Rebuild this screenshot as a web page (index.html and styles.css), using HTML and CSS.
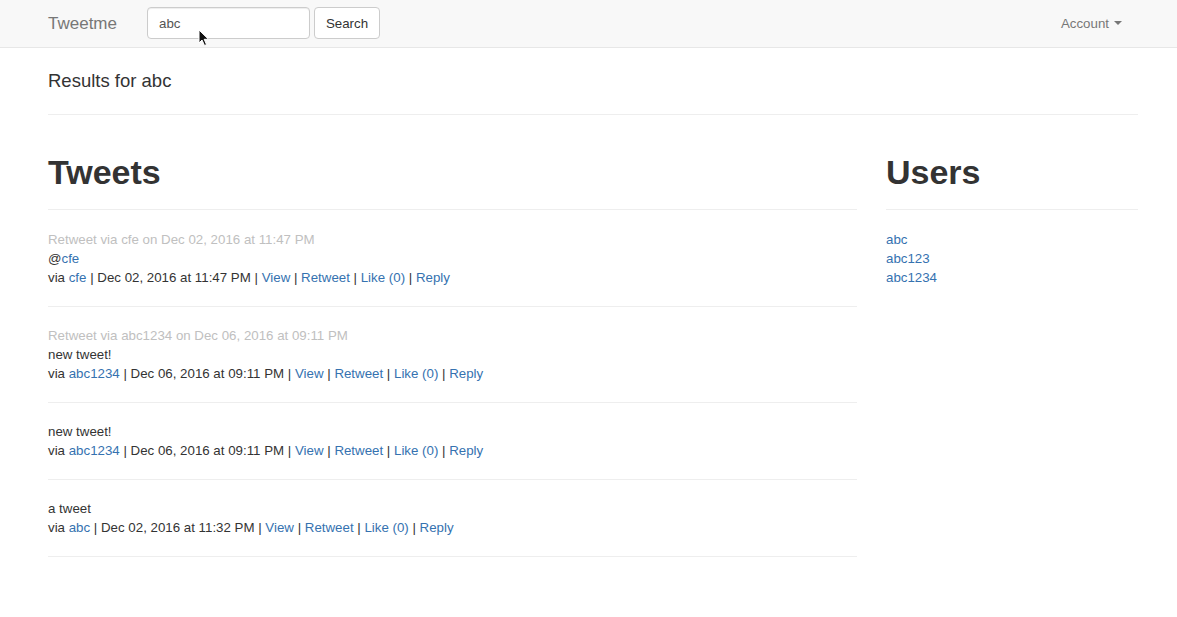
FILE: index.html
```html
<!DOCTYPE html>
<html>
<head>
<meta charset="utf-8">
<title>Tweetme</title>
<link rel="stylesheet" href="styles.css">
</head>
<body>
<nav class="navbar">
  <div class="nav-left">
    <a class="brand" href="#">Tweetme</a>
    <form class="search-form">
      <input class="search-input" type="text" value="abc">
      <button class="search-btn" type="button">Search</button>
    </form>
  </div>
  <a class="account" href="#">Account <span class="caret"></span></a>
  <svg class="cursor" width="12" height="18" viewBox="0 0 12 18"><path d="M1 1 L1 14 L4 11 L6.5 16.5 L8.5 15.6 L6.2 10.3 L10.5 10.3 Z" fill="#111" stroke="#fff" stroke-width="1"/></svg>
</nav>
<main class="container">
  <h4 class="results">Results for abc</h4>
  <hr class="rule">
  <div class="row">
    <section class="col-main">
      <h1 class="heading">Tweets</h1>
      <hr class="rule">
      <div class="tweet">
        <div class="meta-grey">Retweet via cfe on Dec 02, 2016 at 11:47 PM</div>
        <div>@<a href="#">cfe</a></div>
        <div>via <a href="#">cfe</a> | Dec 02, 2016 at 11:47 PM | <a href="#">View</a> | <a href="#">Retweet</a> | <a href="#">Like (0)</a> | <a href="#">Reply</a></div>
      </div>
      <hr class="rule">
      <div class="tweet">
        <div class="meta-grey">Retweet via abc1234 on Dec 06, 2016 at 09:11 PM</div>
        <div>new tweet!</div>
        <div>via <a href="#">abc1234</a> | Dec 06, 2016 at 09:11 PM | <a href="#">View</a> | <a href="#">Retweet</a> | <a href="#">Like (0)</a> | <a href="#">Reply</a></div>
      </div>
      <hr class="rule">
      <div class="tweet">
        <div>new tweet!</div>
        <div>via <a href="#">abc1234</a> | Dec 06, 2016 at 09:11 PM | <a href="#">View</a> | <a href="#">Retweet</a> | <a href="#">Like (0)</a> | <a href="#">Reply</a></div>
      </div>
      <hr class="rule">
      <div class="tweet">
        <div>a tweet</div>
        <div>via <a href="#">abc</a> | Dec 02, 2016 at 11:32 PM | <a href="#">View</a> | <a href="#">Retweet</a> | <a href="#">Like (0)</a> | <a href="#">Reply</a></div>
      </div>
      <hr class="rule">
    </section>
    <aside class="col-side">
      <h1 class="heading">Users</h1>
      <hr class="rule">
      <div class="users">
        <a href="#">abc</a>
        <a href="#">abc123</a>
        <a href="#">abc1234</a>
      </div>
    </aside>
  </div>
</main>
</body>
</html>
```
FILE: styles.css
```css
* { box-sizing: border-box; }
html, body { margin: 0; padding: 0; }
body {
  font-family: "Liberation Sans", Arial, sans-serif;
  font-size: 13.3px;
  line-height: 19px;
  color: #333;
  background: #fff;
}
a { color: #3572b0; text-decoration: none; }

.navbar {
  position: relative;
  height: 48px;
  background: #f8f8f8;
  border-bottom: 1px solid #e7e7e7;
  display: flex;
  align-items: center;
  justify-content: space-between;
  padding: 0 55px 1px 48px;
}
.nav-left { display: flex; align-items: center; }
.brand {
  color: #777;
  font-size: 17px;
  margin-right: 30px;
}
.search-form { display: flex; gap: 4px; }
.search-input {
  width: 163px;
  height: 32px;
  border: 1px solid #ccc;
  border-radius: 4px;
  padding: 0 11px;
  font: 13.3px "Liberation Sans", Arial, sans-serif;
  color: #555;
  background: #fff;
  box-shadow: inset 0 1px 1px rgba(0,0,0,.075);
}
.search-btn {
  width: 66px;
  height: 32px;
  border: 1px solid #ccc;
  border-radius: 4px;
  background: #fff;
  color: #333;
  font: 13.3px "Liberation Sans", Arial, sans-serif;
  padding: 0;
}
.account { color: #777; font-size: 13.3px; display: flex; align-items: center; }
.caret {
  display: inline-block;
  margin-left: 5px;
  width: 0; height: 0;
  border-top: 4px solid #777;
  border-left: 4px solid transparent;
  border-right: 4px solid transparent;
}
.cursor { position: absolute; left: 198px; top: 29px; }

.container { width: 1138px; padding-left: 48px; }
.results {
  margin: 23px 0 0;
  font-size: 18.5px;
  line-height: 20px;
  font-weight: normal;
  color: #333;
}
.rule {
  border: 0;
  border-top: 1px solid #eee;
  margin: 19px 0;
}
.container > .rule { margin: 23px 0 0; }
.row { display: flex; gap: 29px; }
.col-main { width: 809px; }
.col-side { width: 252px; }
.heading {
  margin: 39px 0 0;
  font-size: 34px;
  line-height: 37px;
  font-weight: bold;
  color: #333;
}
.heading + .rule { margin-top: 18px; margin-bottom: 20px; }
.meta-grey { color: #c0c0c0; }
.users { display: flex; flex-direction: column; }
```
